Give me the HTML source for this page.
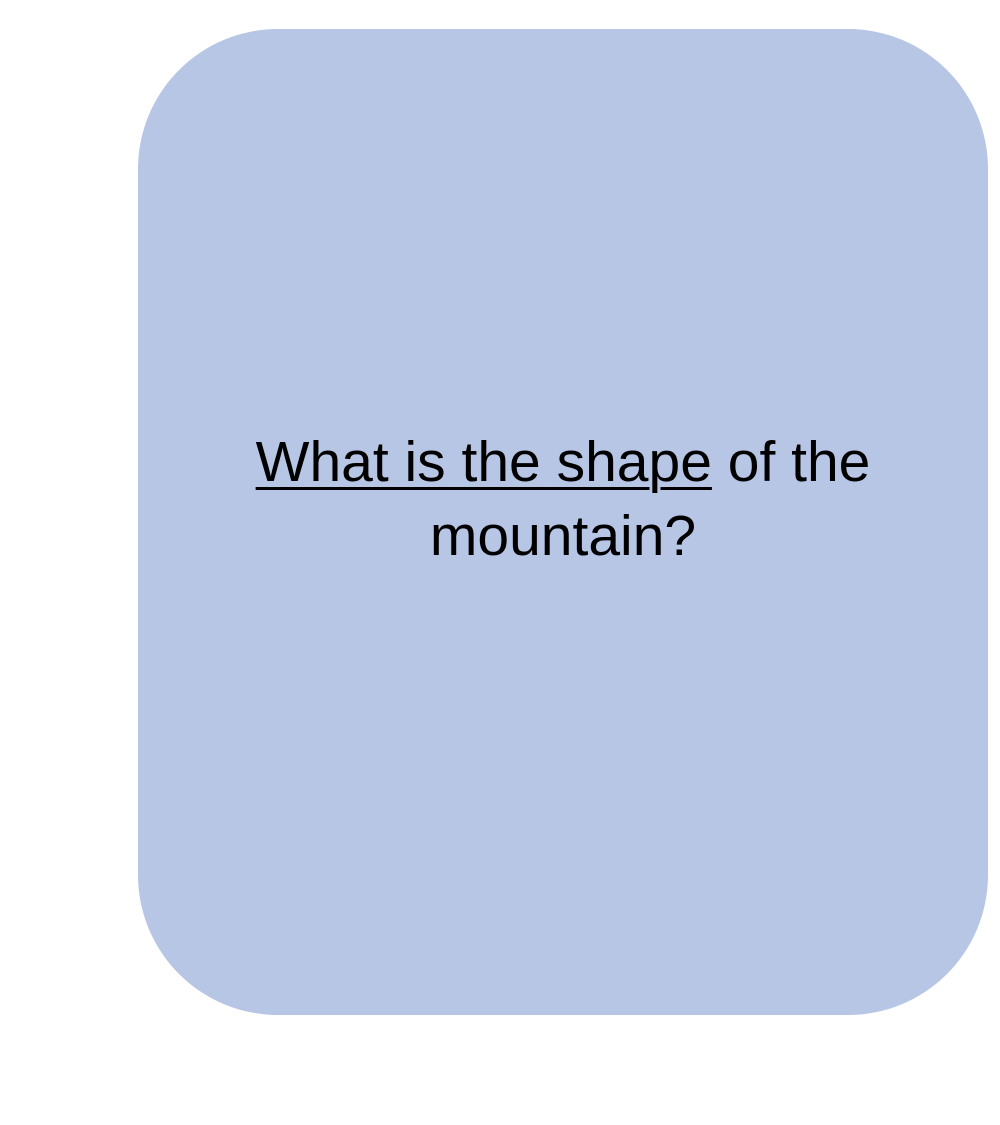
<!DOCTYPE html>
<html><head><meta charset="utf-8"><style>
html,body{margin:0;padding:0;background:#fff;width:1000px;height:1125px;overflow:hidden}
.box{position:absolute;left:138px;top:29px;width:850px;height:986px;background:#b7c6e5;border-radius:140px}
.t{position:absolute;left:138px;width:850px;top:425px;text-align:center;font-family:"Liberation Sans",sans-serif;font-size:57px;line-height:74px;color:#000}
u{text-decoration-thickness:3px;text-underline-offset:6px}
</style></head><body>
<div class="box"></div>
<div class="t"><u>What is the shape</u> of the<br>mountain?</div>
</body></html>
